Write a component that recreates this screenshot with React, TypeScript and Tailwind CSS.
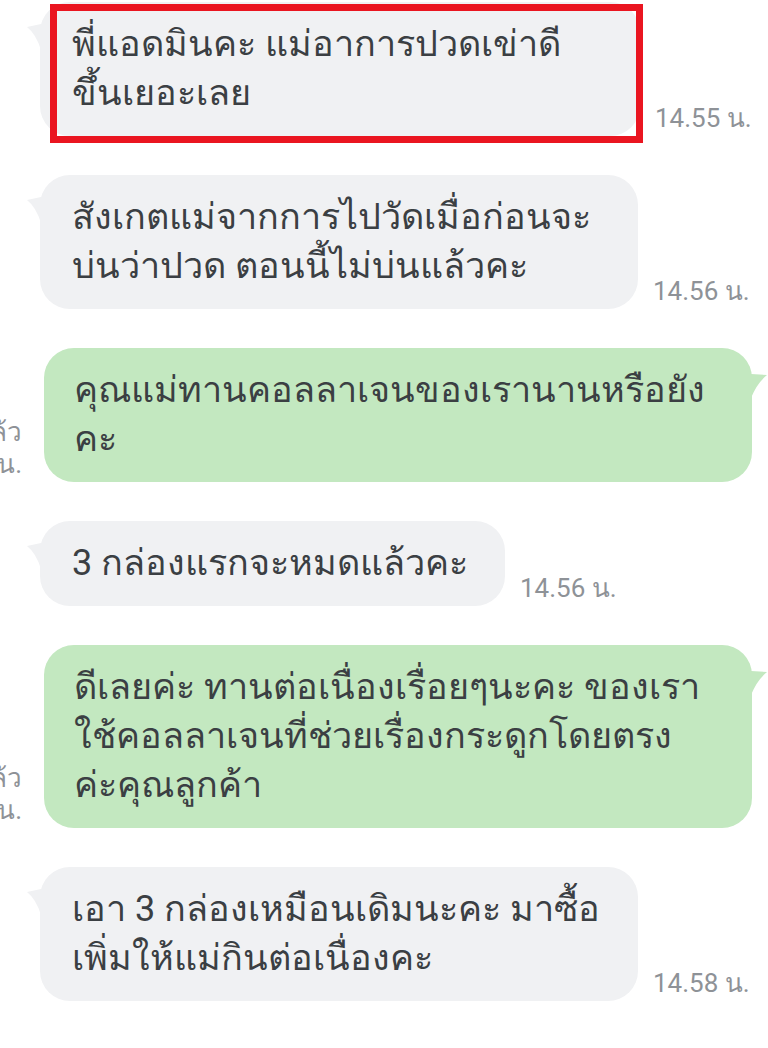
import React from "react";

const FONT = { fontFamily: '"Roboto", "Noto Sans", "DejaVu Sans", sans-serif' };

interface IncomingProps {
  lines: string[];
  time: string;
  width: string;
  highlight?: boolean;
}

const GrayTail = () => (
  <svg className="absolute left-[-13px] top-[22px]" width="14" height="26" viewBox="0 0 14 26">
    <path d="M14 0 L0 3 Q9 10 14 26 Z" fill="#f0f1f3" />
  </svg>
);

const GreenTail = () => (
  <svg className="absolute right-[-15px] top-[26px]" width="16" height="24" viewBox="0 0 16 24">
    <path d="M0 0 L16 1 Q6 9 0 24 Z" fill="#c3e8c0" />
  </svg>
);

const Incoming: React.FC<IncomingProps> = ({ lines, time, width, highlight }) => (
  <div className="flex items-end gap-[15px] pl-[40px]">
    <div className={`relative shrink-0 rounded-[30px] bg-[#f0f1f3] px-[32px] py-[18px] ${width}`}>
      <GrayTail />
      {lines.map((l, i) => (
        <div key={i} className="whitespace-nowrap text-[36px] leading-[49px] text-[#3b3f43]">
          {l}
        </div>
      ))}
      {highlight && (
        <div className="absolute left-[10px] right-[-3px] top-[2px] bottom-[-7px] border-[7px] border-[#ea1520]" />
      )}
    </div>
    <span className="whitespace-nowrap pb-[2px] text-[26px] leading-[32px] text-[#8e9297]">{time}</span>
  </div>
);

interface OutgoingProps {
  lines: string[];
  time: string;
}

const Outgoing: React.FC<OutgoingProps> = ({ lines, time }) => (
  <div className="flex items-end justify-end gap-[22px] pr-[16px]">
    <div className="shrink-0 whitespace-nowrap pb-[2px] text-right text-[26px] leading-[32px] text-[#8e9297]">
      <div>อ่านแล้ว</div>
      <div>{time}</div>
    </div>
    <div className="relative w-[708px] shrink-0 rounded-[30px] bg-[#c3e8c0] px-[30px] py-[18px]">
      <GreenTail />
      {lines.map((l, i) => (
        <div key={i} className="whitespace-nowrap text-[36px] leading-[49px] text-[#3b3f43]">
          {l}
        </div>
      ))}
    </div>
  </div>
);

export default function App() {
  return (
    <div className="h-[1048px] w-[768px] overflow-hidden bg-white pt-[2px]" style={FONT}>
      <div className="flex flex-col gap-[39px]">
        <Incoming
          highlight
          width="w-[600px]"
          time="14.55 น."
          lines={["พี่แอดมินคะ แม่อาการปวดเข่าดี", "ขึ้นเยอะเลย"]}
        />
        <Incoming
          width="w-[598px]"
          time="14.56 น."
          lines={["สังเกตแม่จากการไปวัดเมื่อก่อนจะ", "บ่นว่าปวด ตอนนี้ไม่บ่นแล้วคะ"]}
        />
        <Outgoing time="14.56 น." lines={["คุณแม่ทานคอลลาเจนของเรานานหรือยัง", "คะ"]} />
        <Incoming width="w-[465px]" time="14.56 น." lines={["3 กล่องแรกจะหมดแล้วคะ"]} />
        <Outgoing
          time="14.57 น."
          lines={["ดีเลยค่ะ ทานต่อเนื่องเรื่อยๆนะคะ ของเรา", "ใช้คอลลาเจนที่ช่วยเรื่องกระดูกโดยตรง", "ค่ะคุณลูกค้า"]}
        />
        <Incoming
          width="w-[598px]"
          time="14.58 น."
          lines={["เอา 3 กล่องเหมือนเดิมนะคะ มาซื้อ", "เพิ่มให้แม่กินต่อเนื่องคะ"]}
        />
      </div>
    </div>
  );
}
